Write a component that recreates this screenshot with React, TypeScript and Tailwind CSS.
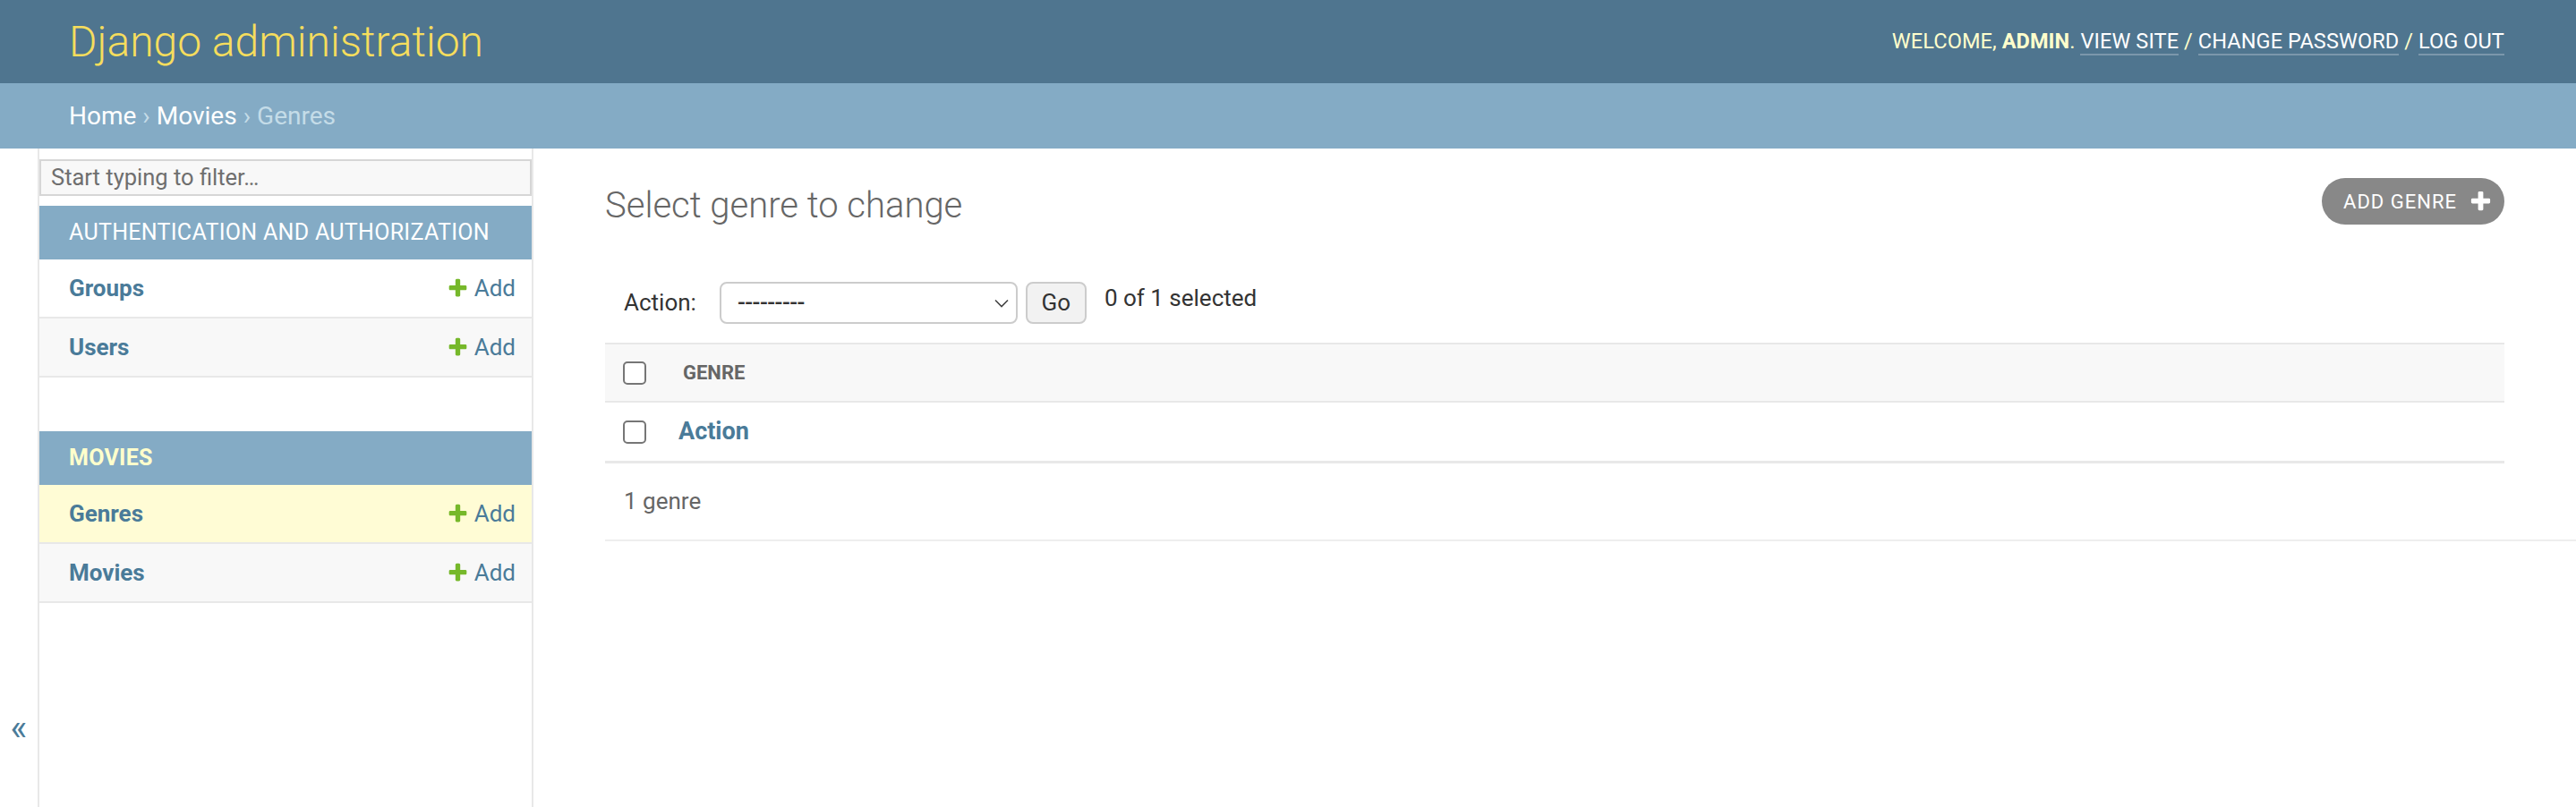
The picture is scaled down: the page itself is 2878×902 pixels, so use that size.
import React from "react";

const plusPath =
  "M1600 736v192q0 40-28 68t-68 28h-416v416q0 40-28 68t-68 28h-192q-40 0-68-28t-28-68v-416h-416q-40 0-68-28t-28-68v-192q0-40 28-68t68-28h416v-416q0-40 28-68t68-28h192q40 0 68 28t28 68v416h416q40 0 68 28t28 68z";

function PlusIcon({ className }: { className?: string }) {
  return (
    <svg viewBox="0 0 1792 1792" className={className} fill="currentColor">
      <path d={plusPath} />
    </svg>
  );
}

const apps = [
  {
    name: "Authentication and Authorization",
    current: false,
    models: [
      { name: "Groups", current: false },
      { name: "Users", current: false },
    ],
  },
  {
    name: "Movies",
    current: true,
    models: [
      { name: "Genres", current: true },
      { name: "Movies", current: false },
    ],
  },
];

function Checkbox() {
  return <span className="block h-[26px] w-[26px] rounded-[5px] border-2 border-[#767676] bg-white" />;
}

export default function App() {
  return (
    <div className="h-[902px] w-full overflow-hidden bg-white font-[Roboto,'Liberation_Sans',sans-serif] text-[#333]">
      {/* header */}
      <header className="flex h-[93px] items-center justify-between bg-[#4f758f] pl-[77px] pr-[80px]">
        <h1 className="text-[48px] font-light leading-none text-[#f5dd5d]">Django administration</h1>
        <div className="text-[23.5px] uppercase tracking-[0.1px] text-[#ffc]">
          Welcome, <strong className="font-bold">admin</strong>.{" "}
          <a className="border-b-2 border-white/25 text-white">View site</a> /{" "}
          <a className="border-b-2 border-white/25 text-white">Change password</a> /{" "}
          <a className="border-b-2 border-white/25 text-white">Log out</a>
        </div>
      </header>

      {/* breadcrumbs */}
      <nav className="flex h-[73px] items-center bg-[#84abc5] pl-[77px] pr-[80px] text-[28px] text-[#c4dce8]">
        <a className="text-white">Home</a>
        <span className="mx-[7px]">›</span>
        <a className="text-white">Movies</a>
        <span className="mx-[7px]">›</span>
        <span>Genres</span>
      </nav>

      <div className="flex h-[736px]">
        {/* sidebar toggle */}
        <div className="flex w-[44px] shrink-0 justify-center border-r-2 border-[#e8e8e8] pt-[628px] text-[40px] leading-none text-[#4a7b99]">
          «
        </div>

        {/* nav sidebar */}
        <aside className="w-[552px] shrink-0 border-r-2 border-[#e8e8e8] pt-[12px]">
          <div className="flex h-[41px] items-center border-2 border-[#d6d6d6] bg-[#f8f8f8] pl-[11px] text-[25.5px] text-[#6f6f6f]">
            Start typing to filter…
          </div>

          {apps.map((app, i) => (
            <div key={app.name} className={i === 0 ? "mt-[11px]" : "mt-[60px]"}>
              <div
                className={
                  "flex h-[60px] items-center bg-[#84abc5] pl-[33px] text-[25px] uppercase tracking-[0.3px] " +
                  (app.current ? "font-bold text-[#ffc]" : "text-white")
                }
              >
                {app.name}
              </div>
              {app.models.map((m, j) => (
                <div
                  key={m.name}
                  className={
                    "flex h-[66px] items-center justify-between border-b-2 border-[#e8e8e8] pl-[33px] pr-[18px] " +
                    (m.current ? "bg-[#fffcd5]" : j % 2 === 1 ? "bg-[#f8f8f8]" : "bg-white")
                  }
                >
                  <span className="text-[26px] font-bold text-[#4a7b99]">{m.name}</span>
                  <span className="flex items-center gap-[6px] text-[26px] text-[#4a7b99]">
                    <PlusIcon className="h-[25px] w-[25px] text-[#76b82a]" />
                    Add
                  </span>
                </div>
              ))}
            </div>
          ))}
        </aside>

        {/* content */}
        <main className="min-w-0 flex-1 pl-[80px] pr-[80px] pt-[33px]">
          <div className="flex items-start justify-between">
            <h1 className="mt-[7px] text-[40px] font-light leading-[48px] text-[#666]">Select genre to change</h1>
            <a className="flex h-[52px] items-center gap-[13px] rounded-full bg-[#888] pl-[24px] pr-[13px] text-[22px] uppercase tracking-[1px] text-white">
              Add genre
              <PlusIcon className="h-[27px] w-[27px] text-white" />
            </a>
          </div>

          {/* actions */}
          <div className="mt-[61px] flex h-[47px] items-center pl-[21px] text-[26px]">
            <span className="mr-[26px]">Action:</span>
            <div className="flex h-[47px] w-[333px] items-center justify-between rounded-[8px] border-2 border-[#ccc] bg-white pl-[18px] pr-[8px]">
              <span className="font-medium tracking-[-0.5px] text-[#333]">---------</span>
              <svg viewBox="0 0 16 10" className="h-[10px] w-[16px]" fill="none" stroke="#444" strokeWidth="1.6">
                <path d="M1 1.5l7 7 7-7" />
              </svg>
            </div>
            <button className="ml-[9px] flex h-[47px] w-[68px] items-center justify-center rounded-[8px] border-2 border-[#ccc] bg-[#f2f2f2] text-[26px] text-[#333]">
              Go
            </button>
            <span className="-mt-[10px] ml-[20px]">0 of 1 selected</span>
          </div>

          {/* results */}
          <div className="mt-[21px]">
            <div className="flex h-[67px] items-center border-y-2 border-[#e8e8e8] bg-[#f8f8f8] pl-[20px]">
              <Checkbox />
              <span className="ml-[41px] text-[22px] font-bold uppercase text-[#666]">Genre</span>
            </div>
            <div className="flex h-[68px] items-center border-b-[3px] border-[#e8e8e8] pl-[20px]">
              <Checkbox />
              <a className="ml-[36px] text-[27px] font-bold text-[#4a7b99]">Action</a>
            </div>
          </div>

          <div className="-mr-[80px] flex h-[87px] items-center border-b-2 border-[#eee] pl-[21px] text-[26px] text-[#666]">
            1 genre
          </div>
        </main>
      </div>
    </div>
  );
}
